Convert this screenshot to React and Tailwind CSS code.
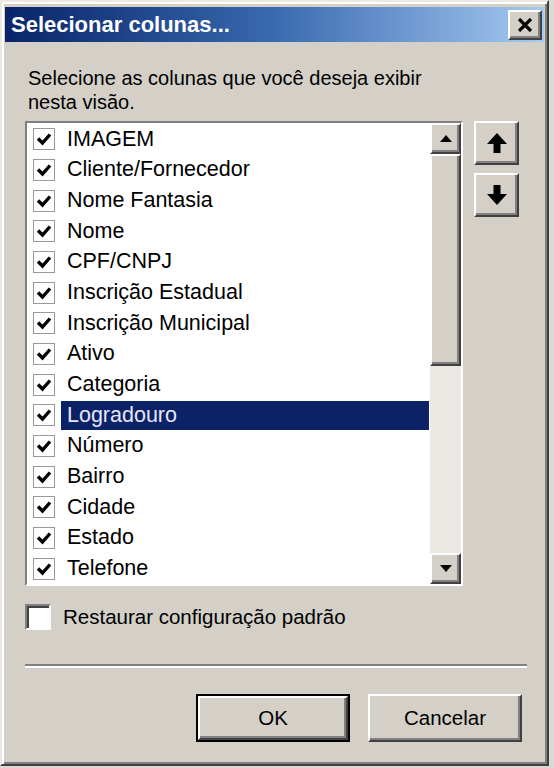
import React from 'react';

const items = [
  'IMAGEM',
  'Cliente/Fornecedor',
  'Nome Fantasia',
  'Nome',
  'CPF/CNPJ',
  'Inscrição Estadual',
  'Inscrição Municipal',
  'Ativo',
  'Categoria',
  'Logradouro',
  'Número',
  'Bairro',
  'Cidade',
  'Estado',
  'Telefone',
];

const SELECTED = 'Logradouro';

// classic win9x raised bevel, doubled
const raised =
  'border-2 border-t-white border-l-white border-r-[#404040] border-b-[#404040] shadow-[inset_-2px_-2px_0_#808080] bg-[#d4d0c8]';

const Check = () => (
  <svg width="16" height="16" viewBox="0 0 16 16">
    <path d="M2 7.5 L6.5 12 L14 3.5" fill="none" stroke="#000" strokeWidth="3.4" strokeLinejoin="miter" />
  </svg>
);

const ArrowIcon = ({ down }) => (
  <svg width="22" height="22" viewBox="0 0 22 22" className={down ? 'rotate-180' : ''}>
    <polygon points="11,1 21,12 14.5,12 14.5,21 7.5,21 7.5,12 1,12" fill="#000" />
  </svg>
);

const Row = ({ label }) => {
  const selected = label === SELECTED;
  return (
    <div className="flex h-[30.75px] items-center pl-[6px] pr-[1px]">
      <div className="flex h-[22px] w-[22px] shrink-0 items-center justify-center border-[1.5px] border-[#9a9a9a] bg-white">
        <Check />
      </div>
      <div
        className={
          'ml-[6px] flex h-[29px] flex-1 items-center px-[6px] text-[21.5px] leading-none ' +
          (selected ? 'bg-[#0c2266] text-[#e6e6fa]' : 'text-black')
        }
      >
        {label}
      </div>
    </div>
  );
};

const ScrollBar = () => (
  <div className="flex w-[31px] shrink-0 flex-col">
    <div className={raised + ' flex h-[31px] items-center justify-center'}>
      <svg width="12" height="7" viewBox="0 0 12 7">
        <polygon points="6,0 12,7 0,7" fill="#000" />
      </svg>
    </div>
    <div className={raised + ' h-[212px]'} />
    <div className="flex-1 bg-[#ebe9e3]" />
    <div className={raised + ' flex h-[31px] items-center justify-center'}>
      <svg width="12" height="7" viewBox="0 0 12 7">
        <polygon points="0,0 12,0 6,7" fill="#000" />
      </svg>
    </div>
  </div>
);

export default function App() {
  return (
    <div className="h-[768px] w-[554px] bg-[#dcdad4] font-['Liberation_Sans',Arial,sans-serif]">
      <div className="flex h-[766px] w-[549px] flex-col border-2 border-t-[#ece9e4] border-l-[#ece9e4] border-r-[#404040] border-b-[#404040] bg-[#d4d0c8] p-[1px] shadow-[inset_2px_2px_0_#ffffff,inset_-2px_-2px_0_#808080]">
        {/* Title bar */}
        <div className="mx-[2px] mt-[4px] flex h-[35px] items-center justify-between bg-linear-to-r from-[#0a246a] via-[#3a6ab0] to-[#a6caf0] pl-[6px] pr-[2px]">
          <span className="text-[22px] font-bold leading-none text-white">Selecionar colunas...</span>
          <button className={raised + ' flex h-[30px] w-[34px] items-center justify-center'}>
            <svg width="16" height="14" viewBox="0 0 16 14">
              <path d="M2 1 L14 13 M14 1 L2 13" stroke="#000" strokeWidth="3.2" />
            </svg>
          </button>
        </div>

        {/* Body */}
        <div className="flex flex-1 flex-col pl-[22px] pr-[22px]">
          <p className="ml-[3px] mt-[24px] text-[20px] leading-[24px] text-black">
            Selecione as colunas que você deseja exibir
            <br />
            nesta visão.
          </p>

          <div className="mt-[7px] flex gap-[11px]">
            {/* List */}
            <div className="flex h-[465px] w-[438px] border-2 border-t-[#808080] border-l-[#808080] border-r-white border-b-white shadow-[inset_2px_2px_0_#404040]">
              <div className="flex flex-1 flex-col bg-white pt-[1px]">
                {items.map((label) => (
                  <Row key={label} label={label} />
                ))}
              </div>
              <ScrollBar />
            </div>

            {/* Move buttons */}
            <div className="flex flex-col gap-[8px]">
              <button className={raised + ' flex h-[44px] w-[45px] items-center justify-center'}>
                <ArrowIcon />
              </button>
              <button className={raised + ' flex h-[44px] w-[45px] items-center justify-center'}>
                <ArrowIcon down />
              </button>
            </div>
          </div>

          {/* Restore default */}
          <label className="mt-[18px] flex items-center">
            <span className="h-[26px] w-[26px] border-2 border-t-[#808080] border-l-[#808080] border-r-white border-b-white bg-white shadow-[inset_2px_2px_0_#404040]" />
            <span className="ml-[12px] text-[20.5px] leading-none text-black">Restaurar configuração padrão</span>
          </label>

          {/* Separator */}
          <div className="mt-[34px] h-[4px] w-[502px] border-t-2 border-b-2 border-t-[#808080] border-b-white" />

          {/* Buttons */}
          <div className="mt-[26px] flex justify-end gap-[18px] pr-[2px]">
            <button className="h-[48px] w-[154px] border-2 border-black">
              <div className={raised + ' flex h-full w-full items-center justify-center text-[20.5px] text-black'}>OK</div>
            </button>
            <button className={raised + ' flex h-[48px] w-[154px] items-center justify-center text-[20.5px] text-black'}>
              Cancelar
            </button>
          </div>
        </div>
      </div>
    </div>
  );
}
